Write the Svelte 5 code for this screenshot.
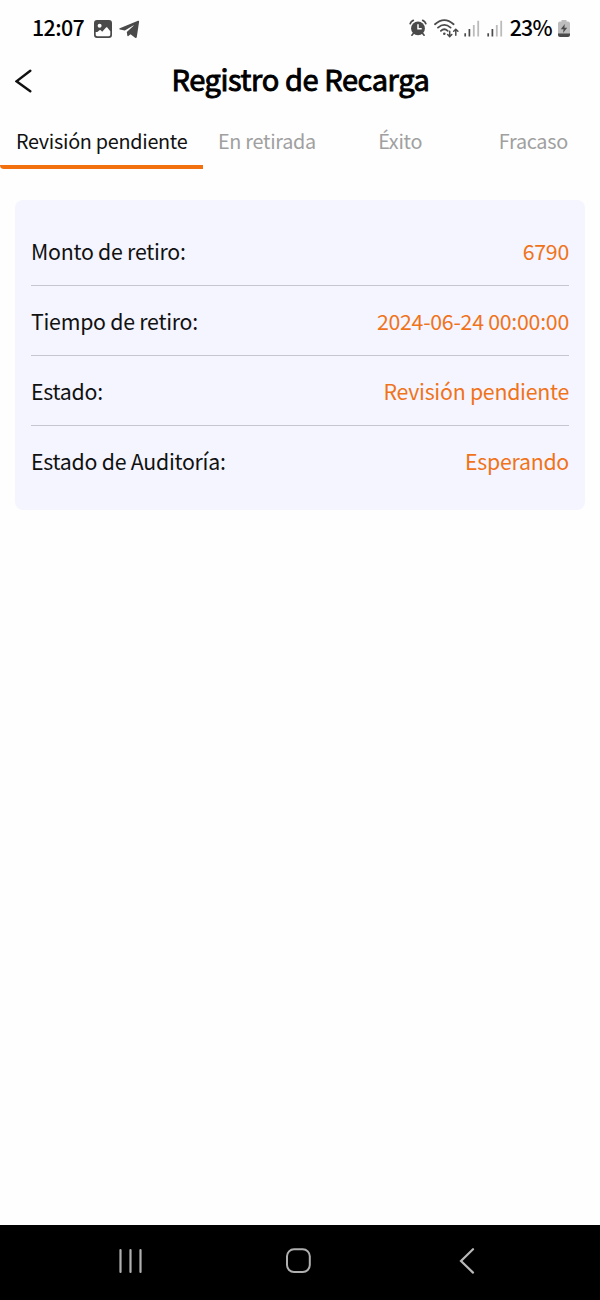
<script lang="ts">
  const tabs = ["Revisión pendiente", "En retirada", "Éxito", "Fracaso"];

  const rows = [
    { label: "Monto de retiro:", value: "6790" },
    { label: "Tiempo de retiro:", value: "2024-06-24 00:00:00" },
    { label: "Estado:", value: "Revisión pendiente" },
    { label: "Estado de Auditoría:", value: "Esperando" },
  ];

  let active = $state(0);
</script>

<div class="screen">
  <div class="status">
    <span class="clock">12:07</span>
    <svg class="photo" viewBox="0 0 18 18" width="18" height="18">
      <path
        fill="#4a4a4a"
        fill-rule="evenodd"
        d="M3 0h12a3 3 0 0 1 3 3v12a3 3 0 0 1-3 3H3a3 3 0 0 1-3-3V3a3 3 0 0 1 3-3zM5.6 3.7a2 2 0 1 0 0 4 2 2 0 0 0 0-4zM1.7 12v2.6c0 1.1.6 1.7 1.7 1.7h11.2c1.1 0 1.7-.6 1.7-1.7v-3.4l-3-3.6c-.4-.5-.9-.5-1.3 0l-3.8 4.1-1.5-1.4c-.4-.4-.8-.4-1.2 0L3.3 12z"
      />
    </svg>
    <svg class="plane" viewBox="0 0 21 19" width="21" height="19">
      <path
        fill="#4a4a4a"
        d="M.8 8.2 19 .8c.8-.3 1.2.1 1.1.9l-2.3 15.4c-.2 1-.9 1.2-1.7.6l-4.6-3.4-2.1 1.7c-.5.4-1 .2-1.1-.4L7.8 12l6.8-6.2c.3-.3 0-.5-.4-.3L5.8 10.6.9 9.4c-.7-.3-.8-.8-.1-1.2z"
      />
    </svg>

    <div class="right">
      <svg class="alarm" viewBox="0 0 18 18" width="18" height="18">
        <circle cx="9" cy="9.4" r="6.9" fill="#4a4a4a" />
        <path
          d="M1.2 4.6Q2 2.4 4.3 1.4M16.8 4.6Q16 2.4 13.7 1.4M4.3 14.5l-1.4 1.7M13.7 14.5l1.4 1.7"
          fill="none"
          stroke="#4a4a4a"
          stroke-width="1.7"
          stroke-linecap="round"
        />
        <path d="M9 5.2v4.6h3.7" fill="none" stroke="#fff" stroke-width="1.5" />
      </svg>
      <svg class="wifi" viewBox="0 0 25 19" width="25" height="19">
        <g fill="none" stroke="#4a4a4a" stroke-width="1.8" stroke-linecap="round">
          <path d="M1 5.2Q10.3-3 19.6 5.2M4 8.6q6.3-5.4 12.6 0M6.9 11.8q3.4-3 6.8 0" />
          <path
            d="M15.7 12.2v5.3M13.6 15.5l2.1 2.1 2.1-2.1M21.8 16.3v-6M19.7 12.3l2.1-2.1 2.1 2.1"
            stroke-width="1.5"
          />
        </g>
        <circle cx="10.3" cy="14.7" r="1.3" fill="#4a4a4a" />
      </svg>
      {#each [0, 1] as sim}
        <svg class="signal" viewBox="0 0 16 17" width="16" height="17">
          <path d="M1.2 13.2v3.3M5.4 9v7.5" stroke="#4a4a4a" stroke-width="1.7" />
          <path d="M9.8 5v11.5M14.2.8v15.7" stroke="#bbb" stroke-width="1.8" />
        </svg>
      {/each}
      <span class="percent">23%</span>
      <svg class="battery" viewBox="0 0 12 17" width="12" height="17">
        <path
          d="M3.5 0h5v1.6H10a2 2 0 0 1 2 2V14H0V3.6a2 2 0 0 1 2-2h1.5z"
          fill="#bdbdbd"
        />
        <path d="M0 13.5h12V15a2 2 0 0 1-2 2H2a2 2 0 0 1-2-2z" fill="#4a4a4a" />
        <path d="M6.8 4 2.8 9.3h2.8L5 13l4.2-5.2H6.4z" fill="#4a4a4a" />
      </svg>
    </div>
  </div>

  <header>
    <button type="button" aria-label="Atrás">
      <svg viewBox="0 0 18 24" width="18" height="24">
        <path
          d="M15.3 1.7 1.5 12.3l13.8 10"
          fill="none"
          stroke="#111"
          stroke-width="2.4"
          stroke-linecap="round"
        />
      </svg>
    </button>
    <h1>Registro de Recarga</h1>
  </header>

  <nav>
    {#each tabs as tab, i}
      <button
        type="button"
        class="tab"
        class:active={active === i}
        onclick={() => (active = i)}>{tab}</button
      >
    {/each}
  </nav>

  <main>
    <div class="card">
      {#each rows as row}
        <div class="row">
          <span>{row.label}</span>
          <span class="value">{row.value}</span>
        </div>
      {/each}
    </div>
  </main>

  <footer>
    <svg viewBox="0 0 26 26" width="26" height="26">
      <path
        d="M3.5 2v22M13.5 2v22M23.5 2v22"
        stroke="#b0b0b0"
        stroke-width="2.2"
        stroke-linecap="round"
      />
    </svg>
    <svg viewBox="0 0 26 26" width="26" height="26">
      <rect
        x="1"
        y="1.3"
        width="22.8"
        height="22.8"
        rx="7"
        fill="none"
        stroke="#b0b0b0"
        stroke-width="2"
      />
    </svg>
    <svg viewBox="0 0 26 26" width="26" height="26">
      <path
        d="M18 1.2 6 13l12 11.6"
        fill="none"
        stroke="#b8b8b8"
        stroke-width="2.2"
        stroke-linecap="round"
      />
    </svg>
  </footer>
</div>

<style>
  :global(body) {
    margin: 0;
    background: #fff;
  }

  .screen {
    width: 600px;
    height: 1300px;
    display: flex;
    flex-direction: column;
    background: #fefefe;
    color: #111;
    font-family: "Noto Sans CJK SC", "Noto Sans", sans-serif;
  }

  button {
    padding: 0;
    border: none;
    background: transparent;
    font-family: inherit;
  }

  svg {
    display: block;
    flex: none;
  }

  .status {
    height: 56px;
    display: flex;
    align-items: center;
    padding: 0 30px 0 32px;
    box-sizing: border-box;
  }

  .clock,
  .percent {
    font-size: 21.4px;
    font-weight: 500;
    line-height: 30px;
    letter-spacing: -0.6px;
    color: #000;
    padding-bottom: 3px;
  }

  .percent {
    letter-spacing: -0.7px;
  }

  .photo {
    margin: 1px 0 0 10px;
  }

  .plane {
    margin: 2px 0 0 7px;
  }

  .right {
    margin-left: auto;
    display: flex;
    align-items: center;
  }

  .wifi {
    margin: 1px 5px 0 7px;
  }

  .signal {
    margin-right: 7px;
    margin-top: 1px;
  }

  .battery {
    margin: 1px 0 0 6px;
  }

  header {
    height: 50px;
    display: grid;
    grid-template-columns: 60px 1fr 60px;
    align-items: center;
  }

  header button {
    padding-left: 15px;
  }

  h1 {
    margin: 0;
    padding: 0 0 6px 1px;
    text-align: center;
    font-size: 29px;
    line-height: 40px;
    font-weight: 400;
    letter-spacing: -0.4px;
    -webkit-text-stroke: 0.9px #000;
    color: #000;
    white-space: nowrap;
  }

  nav {
    height: 63px;
    display: grid;
    grid-template-columns: 200fr 133fr 133fr 133fr;
    justify-items: center;
  }

  .tab {
    min-width: 0;
    height: 63px;
    padding-top: 10px;
    box-sizing: border-box;
    border-bottom: 4px solid transparent;
    font-size: 19.8px;
    letter-spacing: -0.28px;
    color: #a0a0a0;
    white-space: nowrap;
  }

  .tab.active {
    justify-self: start;
    padding: 10px 16px 0;
    margin-right: -4px;
    border-bottom-color: #f3700f;
    border-radius: 0 0 0 4px;
    color: #111;
  }

  main {
    flex: 1;
    padding: 31px 15px 0;
  }

  .card {
    padding: 16px 16px 14px;
    border-radius: 8px;
    background: #f4f5ff;
  }

  .row {
    height: 70px;
    display: flex;
    justify-content: space-between;
    align-items: center;
    box-sizing: border-box;
    border-bottom: 1px solid #c6c6d2;
    font-size: 21.3px;
    letter-spacing: -0.25px;
  }

  .row:last-child {
    border-bottom-color: transparent;
  }

  .value {
    color: #f0731a;
  }

  footer {
    height: 75px;
    display: flex;
    justify-content: space-between;
    align-items: center;
    padding: 0 119px 4px 117px;
    box-sizing: border-box;
    background: #000;
  }
</style>
